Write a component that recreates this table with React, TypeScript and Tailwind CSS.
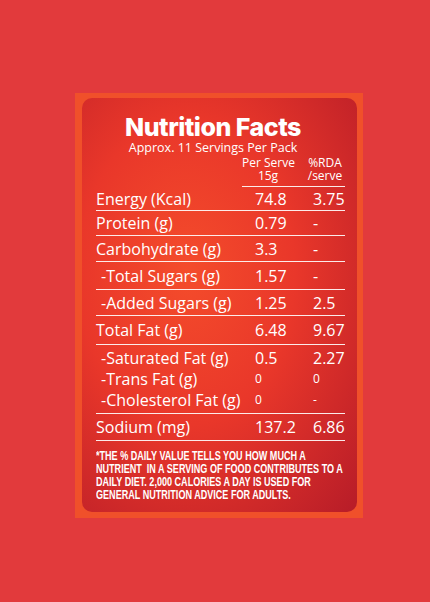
import React from 'react';

type Row = { label: string; value: string; rda: string; indent?: boolean };

const mainRows: { rows: Row[]; h: string }[] = [
  { rows: [{ label: 'Energy (Kcal)', value: '74.8', rda: '3.75' }], h: 'h-[24px]' },
  { rows: [{ label: 'Protein (g)', value: '0.79', rda: '-' }], h: 'h-[25px]' },
  { rows: [{ label: 'Carbohydrate (g)', value: '3.3', rda: '-' }], h: 'h-[26px]' },
  { rows: [{ label: '-Total Sugars (g)', value: '1.57', rda: '-', indent: true }], h: 'h-[28px]' },
  { rows: [{ label: '-Added Sugars (g)', value: '1.25', rda: '2.5', indent: true }], h: 'h-[26px]' },
  { rows: [{ label: 'Total Fat (g)', value: '6.48', rda: '9.67' }], h: 'h-[29px]' },
];

const footnote = [
  '*THE % DAILY VALUE TELLS YOU HOW MUCH A',
  'NUTRIENT  IN A SERVING OF FOOD CONTRIBUTES TO A',
  'DAILY DIET. 2,000 CALORIES A DAY IS USED FOR',
  'GENERAL NUTRITION ADVICE FOR ADULTS.',
];

const Line = ({ row, small }: { row: Row; small?: boolean }) => (
  <div className="grid grid-cols-[159px_58px_1fr] items-center">
    <span className={row.indent ? 'pl-[5px]' : ''}>{row.label}</span>
    <span className={small ? 'text-[12px]' : ''}>{row.value}</span>
    <span className={small ? 'text-[12px]' : ''}>{row.rda}</span>
  </div>
);

export default function App() {
  return (
    <div className="w-[430px] h-[602px] bg-[#e23a3c] flex justify-center pt-[93px] pl-[8px]">
      <div className="w-[288px] h-[425px] bg-[#f0502a] pl-[7px] pr-[6px] pt-[5px] pb-[6px]">
        <div
          className="h-full rounded-[10px] bg-[radial-gradient(ellipse_at_38%_42%,#f44c2b_0%,#e9372a_45%,#b71c28_100%)] pl-[14px] pr-[12px] pt-[16px] text-white overflow-hidden"
          style={{ fontFamily: '"Open Sans", sans-serif' }}
        >
          {/* header */}
          <div className="pr-[15px] text-center">
            <h1
              className="text-[25px] leading-[26px] font-extrabold tracking-[-0.5px]"
              style={{ fontFamily: 'Inter, sans-serif' }}
            >
              Nutrition Facts
            </h1>
            <p className="mt-[2px] text-[12.5px] leading-[12px]">Approx. 11 Servings Per Pack</p>
          </div>

          <div className="flex">
            <div className="w-[146px]" />
            <div className="flex border-b border-white/90 w-[103px] text-[12px] leading-[13px] pb-[4px] pt-[2px] whitespace-nowrap">
              <div className="w-[52px] text-center">
                <div>Per Serve</div>
                <div>15g</div>
              </div>
              <div className="ml-[11px] w-[40px] text-center">
                <div>%RDA</div>
                <div>/serve</div>
              </div>
            </div>
          </div>

          <div className="text-[16px] leading-[18px]">
            {mainRows.map((g, i) => (
              <div key={i} className={`${g.h} flex flex-col justify-center border-b border-white/90`}>
                {g.rows.map(r => (
                  <Line key={r.label} row={r} />
                ))}
              </div>
            ))}
            <div className="h-[69px] flex flex-col justify-center gap-[3px] border-b border-white/90">
              <Line row={{ label: '-Saturated Fat (g)', value: '0.5', rda: '2.27', indent: true }} />
              <Line row={{ label: '-Trans Fat (g)', value: '0', rda: '0', indent: true }} small />
              <Line row={{ label: '-Cholesterol Fat (g)', value: '0', rda: '-', indent: true }} small />
            </div>
            <div className="h-[27px] flex flex-col justify-center border-b border-white/90">
              <Line row={{ label: 'Sodium (mg)', value: '137.2', rda: '6.86' }} />
            </div>
          </div>

          <div
            className="mt-[9px] w-[340px] origin-left scale-x-[0.755] text-[12px] leading-[13px] font-bold"
            style={{ fontFamily: '"Liberation Sans", Arial, sans-serif' }}
          >
            {footnote.map(l => (
              <div key={l} className="whitespace-pre">
                {l}
              </div>
            ))}
          </div>
        </div>
      </div>
    </div>
  );
}
